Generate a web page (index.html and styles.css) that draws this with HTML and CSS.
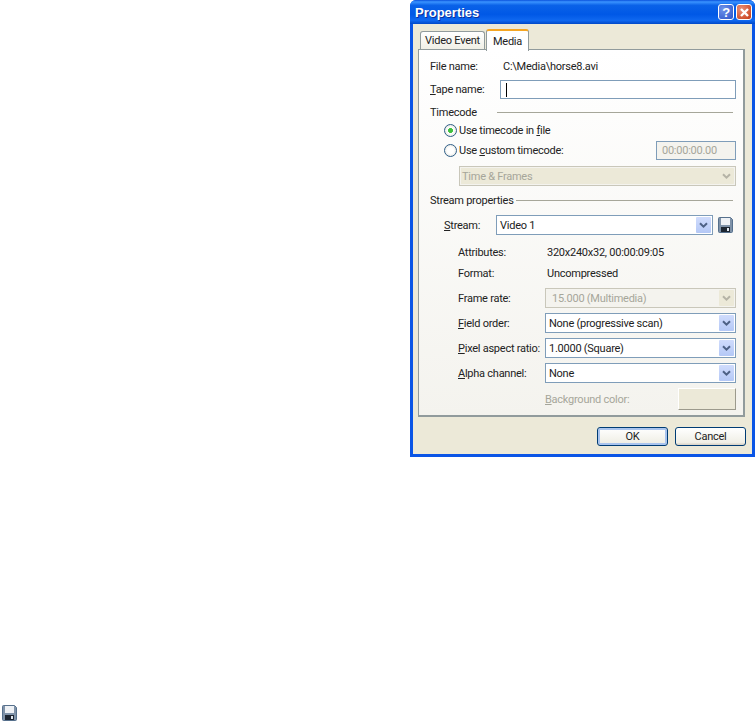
FILE: index.html
```html
<!DOCTYPE html>
<html lang="en">
<head>
<meta charset="utf-8">
<title>Properties</title>
<link rel="stylesheet" href="styles.css">
</head>
<body>
<svg class="defs" width="0" height="0" aria-hidden="true">
  <symbol id="chev" viewBox="0 0 9 7"><path d="M1 1.2 4.5 4.7 8 1.2" fill="none" stroke="currentColor" stroke-width="2"/></symbol>
  <symbol id="disk" viewBox="0 0 15 16">
    <path d="M.5 1.5a1 1 0 0 1 1-1h11l2 2v12a1 1 0 0 1-1 1h-12a1 1 0 0 1-1-1z" fill="#7f92a8" stroke="#56708c"/>
    <rect x="3" y="1" width="9" height="7" fill="#eef1f5"/>
    <rect x="3" y="10" width="9" height="5" fill="#1c2530"/>
    <rect x="9" y="11" width="2" height="3" fill="#dfe6ee"/>
  </symbol>
</svg>
<main class="window">
  <header class="titlebar">
    <span class="title">Properties</span>
    <span class="cap cap-help">?</span>
    <span class="cap cap-close"><svg width="11" height="11" viewBox="0 0 11 11"><path d="M2 2 9 9M9 2 2 9" stroke="#fff" stroke-width="2.4"/></svg></span>
  </header>
  <div class="client">
    <nav class="tabs">
      <span class="tab">Video Event</span>
      <span class="tab tab-active">Media</span>
    </nav>
    <section class="panel">
      <div class="row h18 file"><span class="lbl-file">File name:</span><span>C:\Media\horse8.avi</span></div>
      <div class="row h19 mt5"><span class="lbl-tape"><u>T</u>ape name:</span><span class="edit tape"><i class="caret"></i></span></div>
      <div class="row h18 mt4 legend"><span class="lg-time">Timecode</span><i class="rule"></i></div>
      <div class="row h18 indent"><i class="radio on"></i><span>Use timecode in <u>f</u>ile</span></div>
      <div class="row h19 mt2 indent"><i class="radio"></i><span>Use <u>c</u>ustom timecode:</span><span class="edit custom">00:00:00.00</span></div>
      <div class="row h20 mt6 sel-wrap1"><span class="combo disabled wide"><span class="val">Time &amp; Frames</span><span class="drop"><svg width="9" height="7"><use href="#chev"/></svg></span></span></div>
      <div class="row h18 mt5 legend"><span class="lg-stream">Stream properties</span><i class="rule"></i></div>
      <div class="row h20 mt6 indent"><span class="lbl-stream"><u>S</u>tream:</span><span class="combo stream"><span class="val">Video 1</span><span class="drop"><svg width="9" height="7"><use href="#chev"/></svg></span></span><svg class="disk" width="15" height="16"><use href="#disk"/></svg></div>
      <div class="row h18 mt8 prop"><span class="lbl">Attributes:</span><span class="info">320x240x32, 00:00:09:05</span></div>
      <div class="row h18 mt3 prop"><span class="lbl">Format:</span><span class="info">Uncompressed</span></div>
      <div class="row h20 mt6 prop"><span class="lbl">Frame rate:</span><span class="combo disabled field"><span class="val">15.000 (Multimedia)</span><span class="drop"><svg width="9" height="7"><use href="#chev"/></svg></span></span></div>
      <div class="row h20 mt5 prop"><span class="lbl"><u>F</u>ield order:</span><span class="combo field"><span class="val">None (progressive scan)</span><span class="drop"><svg width="9" height="7"><use href="#chev"/></svg></span></span></div>
      <div class="row h20 mt5 prop"><span class="lbl"><u>P</u>ixel aspect ratio:</span><span class="combo field"><span class="val">1.0000 (Square)</span><span class="drop"><svg width="9" height="7"><use href="#chev"/></svg></span></span></div>
      <div class="row h20 mt5 prop"><span class="lbl"><u>A</u>lpha channel:</span><span class="combo field"><span class="val">None</span><span class="drop"><svg width="9" height="7"><use href="#chev"/></svg></span></span></div>
      <div class="row h22 mt5 prop"><span class="lbl"></span><span class="bg-label"><u>B</u>ackground color:</span><span class="swatch"></span></div>
    </section>
    <footer class="buttons">
      <span class="btn btn-default">OK</span>
      <span class="btn">Cancel</span>
    </footer>
  </div>
</main>
<svg class="corner-disk" width="15" height="16"><use href="#disk"/></svg>
</body>
</html>
```

FILE: styles.css
```css
* { box-sizing: border-box; }
html, body { margin: 0; height: 723px; overflow: hidden; }
body {
  position: relative;
  background: #fff;
  font: 11px Roboto, "Liberation Sans", sans-serif;
  letter-spacing: -0.25px;
  color: #222;
}
.defs { position: absolute; }
.window {
  width: 345px;
  height: 457px;
  margin-left: 410px;
  display: flex;
  flex-direction: column;
  background: #0a55e6;
  border-radius: 6px 6px 0 0;
}
.titlebar {
  height: 24px;
  flex: none;
  display: flex;
  align-items: center;
  padding: 0 3px 0 5px;
  border-radius: 6px 6px 0 0;
  background: linear-gradient(#0a52dc 0, #3a93ff 8%, #0a62e8 22%, #0058e6 60%, #0f68f0 85%, #0048c8 100%);
}
.title {
  flex: 1;
  color: #fff;
  font: bold 13px "Liberation Sans", sans-serif;
  letter-spacing: 0;
  text-shadow: 1px 1px 0 #0b2f9a;
}
.cap {
  width: 16px;
  height: 16px;
  margin-left: 2px;
  display: flex;
  align-items: center;
  justify-content: center;
  border: 1px solid #fff;
  border-radius: 3px;
  color: #fff;
  font: bold 13px "Liberation Sans", sans-serif;
}
.cap-help { background: radial-gradient(circle at 30% 30%, #6f93ea, #2c54c9); }
.cap-close { background: radial-gradient(circle at 30% 30%, #ea9078, #c63a14); }
.client {
  flex: 1;
  margin: 0 3px 3px 3px;
  padding: 6px 7px 0 5px;
  background: #ece9d8;
  display: flex;
  flex-direction: column;
}
.tabs {
  height: 20px;
  display: flex;
  align-items: flex-end;
  padding-left: 2px;
  position: relative;
  z-index: 1;
  margin-bottom: -1px;
}
.tab {
  width: 65px;
  height: 18px;
  margin: 0 1px 1px 0;
  display: flex;
  align-items: center;
  justify-content: center;
  background: linear-gradient(#fff, #f0efe6);
  border: 1px solid #919b9c;
  border-bottom: 0;
  border-radius: 3px 3px 0 0;
}
.tab-active {
  width: 43px;
  height: 22px;
  margin-bottom: -1px;
  background: #fff;
  border-top: 2px solid #f5a623;
}
.panel {
  height: 368px;
  padding: 7px 0 0 11px;
  border: 1px solid #919b9c;
  border-right-width: 2px;
  border-bottom-width: 2px;
  background: linear-gradient(#fff, #f4f3ee);
}
.row { display: flex; align-items: center; white-space: nowrap; }
.h18 { height: 18px; }
.h19 { height: 19px; }
.h20 { height: 20px; }
.h22 { height: 22px; }
.mt2 { margin-top: 2px; }
.mt3 { margin-top: 3px; }
.mt4 { margin-top: 4px; }
.mt5 { margin-top: 5px; }
.mt6 { margin-top: 6px; }
.mt8 { margin-top: 8px; }
.lbl-file { width: 73px; }
.lbl-tape { width: 70px; }
.edit {
  height: 100%;
  display: flex;
  align-items: center;
  border: 1px solid #7f9db9;
  background: #fff;
}
.tape { width: 236px; padding-left: 5px; }
.caret { width: 1px; height: 14px; background: #000; }
.lg-time { width: 67px; }
.lg-stream { width: 86px; }
.rule { flex: 1; height: 1px; background: #a6a699; margin-right: 10px; }
.indent { padding-left: 14px; }
.radio {
  width: 13px;
  height: 13px;
  margin-right: 2px;
  border: 1px solid #2f5f88;
  border-radius: 50%;
  background: radial-gradient(circle, #fff 40%, #dcdcd2 100%);
}
.radio.on { background: radial-gradient(circle, #3fc03f 0 28%, #fff 36%, #dcdcd2 100%); }
.custom {
  width: 80px;
  margin-left: auto;
  margin-right: 7px;
  padding-left: 5px;
  color: #a6a69a;
  background: #f4f3ee;
}
.sel-wrap1 { padding-left: 29px; }
.combo {
  height: 100%;
  display: flex;
  align-items: center;
  padding: 1px;
  border: 1px solid #7f9db9;
  background: #fff;
}
.val { flex: 1; padding-left: 2px; }
.drop {
  width: 15px;
  height: 100%;
  display: flex;
  align-items: center;
  justify-content: center;
  border-radius: 1px;
  background: linear-gradient(#d0dcfc, #b4c8f6);
  color: #4d6185;
}
.combo.disabled { border-color: #c9c7ba; background: #f4f3ee; color: #a6a69a; }
.combo.disabled .val { align-self: stretch; display: flex; align-items: center; padding-left: 1px; background: #ece9d8; }
.combo.disabled .drop { background: #ece9d8; color: #b5b3a6; }
.combo.disabled.field .val { background: transparent; padding-left: 5px; }
.wide { width: 277px; }
.lbl-stream { width: 52px; }
.stream { width: 217px; }
.disk { margin-left: 5px; }
.prop { padding-left: 28px; }
.lbl { width: 87px; flex: none; }
.info { margin-left: 2px; }
.field { width: 191px; }
.field .val { padding-left: 2px; }
.bg-label { width: 133px; color: #a6a69a; }
.swatch {
  width: 58px;
  height: 100%;
  background: #ece9d8;
  border: 1px solid;
  border-color: #fff #9c9a8c #9c9a8c #fff;
}
.buttons {
  display: flex;
  justify-content: flex-end;
  gap: 7px;
  padding-top: 10px;
  margin-right: -1px;
}
.btn {
  width: 71px;
  height: 19px;
  display: flex;
  align-items: center;
  justify-content: center;
  border: 1px solid #003c74;
  border-radius: 3px;
  background: linear-gradient(#fff, #f0efe6 85%, #d6d0c5);
}
.btn-default { box-shadow: inset 0 0 0 2px #a9c4ee; }
.corner-disk { position: absolute; left: 2px; top: 705px; }
```
